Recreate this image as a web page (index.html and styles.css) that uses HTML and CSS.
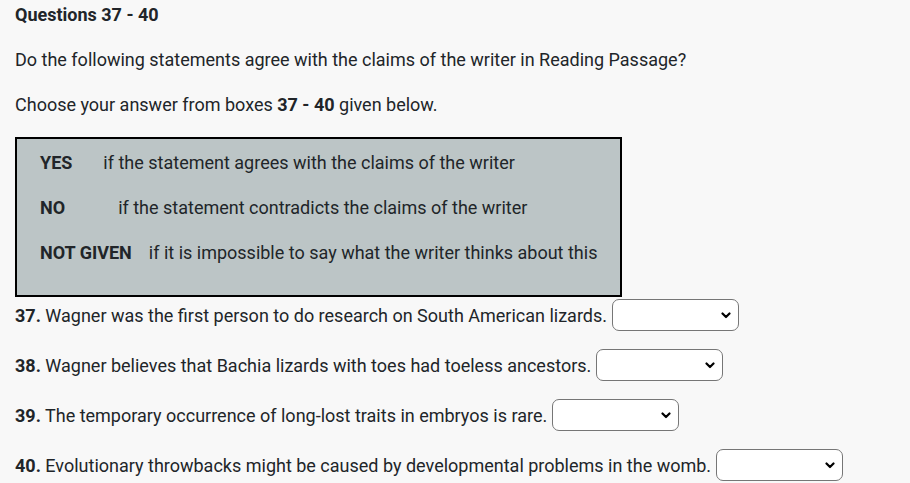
FILE: index.html
```
<!DOCTYPE html>
<html lang="en">
<head>
<meta charset="utf-8">
<title>Questions 37 - 40</title>
<link rel="stylesheet" href="styles.css">
</head>
<body>
<main class="page">
  <h2 class="title">Questions 37 - 40</h2>
  <p class="intro">Do the following statements agree with the claims of the writer in Reading Passage?</p>
  <p class="intro">Choose your answer from boxes <strong>37 - 40</strong> given below.</p>
  <div class="legend">
    <div class="legend-row"><strong>YES</strong><span class="desc desc-yes">if the statement agrees with the claims of the writer</span></div>
    <div class="legend-row"><strong>NO</strong><span class="desc desc-no">if the statement contradicts the claims of the writer</span></div>
    <div class="legend-row"><strong>NOT GIVEN</strong><span class="desc desc-ng">if it is impossible to say what the writer thinks about this</span></div>
  </div>
  <div class="questions">
    <div class="q"><span class="q-text"><strong>37.</strong> Wagner was the first person to do research on South American lizards.</span><select class="answer"><option></option><option>YES</option><option>NO</option><option>NOT GIVEN</option></select></div>
    <div class="q"><span class="q-text"><strong>38.</strong> Wagner believes that Bachia lizards with toes had toeless ancestors.</span><select class="answer"><option></option><option>YES</option><option>NO</option><option>NOT GIVEN</option></select></div>
    <div class="q"><span class="q-text"><strong>39.</strong> The temporary occurrence of long-lost traits in embryos is rare.</span><select class="answer"><option></option><option>YES</option><option>NO</option><option>NOT GIVEN</option></select></div>
    <div class="q"><span class="q-text"><strong>40.</strong> Evolutionary throwbacks might be caused by developmental problems in the womb.</span><select class="answer"><option></option><option>YES</option><option>NO</option><option>NOT GIVEN</option></select></div>
  </div>
</main>
</body>
</html>
```
FILE: styles.css
```
html, body {
  margin: 0;
  padding: 0;
  background: #f8f8f8;
}
body {
  font-family: Roboto, "Liberation Sans", sans-serif;
  color: #212529;
  font-size: 18px;
}
.page {
  padding: 2px 0 0 15px;
}
.title {
  margin: 0 0 19px;
  font-size: 18px;
  font-weight: 700;
  line-height: 26px;
}
.intro {
  margin: 0 0 19px;
  line-height: 26px;
}
.legend {
  width: 580px;
  border: 2px solid #000;
  background: #bcc5c6;
  padding: 1px 0 20px 23px;
}
.legend-row {
  height: 45px;
  display: flex;
  align-items: center;
}
.desc-yes { margin-left: 31px; }
.desc-no { margin-left: 53px; }
.desc-ng { margin-left: 17px; }
.questions {
  display: flex;
  flex-direction: column;
  gap: 18px;
  padding-top: 2px;
}
.q {
  display: flex;
  align-items: center;
  height: 32px;
}
.answer {
  -webkit-appearance: none;
  appearance: none;
  margin-left: 5px;
  width: 127px;
  height: 32px;
  border: 1px solid #767676;
  border-radius: 7px;
  background-color: #fff;
  background-image: url("data:image/svg+xml,%3Csvg xmlns='http://www.w3.org/2000/svg' width='10' height='7' viewBox='0 0 10 7'%3E%3Cpath d='M1.5 1.5l3.5 3.5 3.5-3.5' fill='none' stroke='%23000' stroke-width='2.2' stroke-linecap='round' stroke-linejoin='round'/%3E%3C/svg%3E");
  background-repeat: no-repeat;
  background-position: right 7px center;
  background-size: 10px 7px;
  font-family: Roboto, sans-serif;
  font-size: 16px;
}
```
